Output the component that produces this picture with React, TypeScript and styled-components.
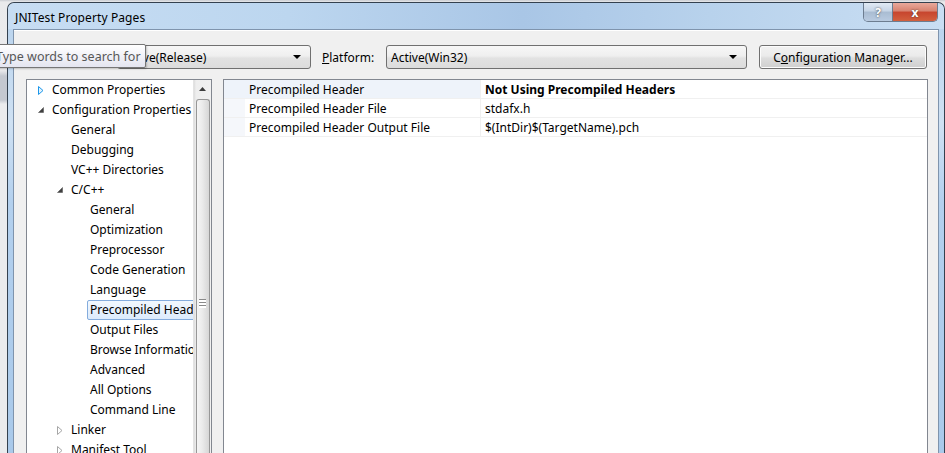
import React from 'react'
import styled, { createGlobalStyle } from 'styled-components'

const GlobalStyle = createGlobalStyle`
  html, body {
    margin: 0;
    padding: 0;
  }
  body {
    font-family: "Noto Sans", "Liberation Sans", sans-serif;
    font-size: 12px;
    color: #000;
    background: #e6e7ea;
    overflow: hidden;
  }
`

const Screen = styled.div`
  position: relative;
  width: 945px;
  height: 453px;
  overflow: hidden;
  display: flex;
  box-sizing: border-box;
  padding: 2px 0 0 7px;
  background: linear-gradient(180deg, #c9ccd2 0, #e9eaec 2px, #ececee 70px, #c4c8d0 76px, #c4c8d0 100px, #eaebed 104px);
`

const Window = styled.div`
  width: 938px;
  display: flex;
  flex-direction: column;
  overflow: hidden;
  border: 1px solid #34414f;
  border-bottom: none;
  border-radius: 7px 7px 0 0;
  background: linear-gradient(180deg, #c2d9f0 0, #bcd5ee 30px, #cfe1f3 120px, #b3d0ee 200px, #a9c9ea 453px);
`

const TitleBar = styled.div`
  height: 26px;
  flex-shrink: 0;
  display: flex;
  align-items: flex-start;
  padding-left: 7px;
  border-radius: 6px 6px 0 0;
  background: linear-gradient(90deg, #c7ddf3 0, #bcd6ef 30%, #a9c6e6 55%, #b8d2ec 75%, #c9def3 100%);
`

const Title = styled.div`
  margin-top: 6px;
  font-size: 12px;
  color: #000;
  letter-spacing: 0.1px;
`

const CaptionButtons = styled.div`
  margin-left: auto;
  margin-right: 6px;
  display: flex;
  border: 1px solid #6d7d90;
  border-top: none;
  border-radius: 0 0 5px 5px;
  overflow: hidden;
`

const CaptionButton = styled.div<{ $close?: boolean }>`
  width: ${(p) => (p.$close ? 44 : 28)}px;
  height: 18px;
  display: flex;
  align-items: center;
  justify-content: center;
  color: #fff;
  font-weight: bold;
  font-size: 12px;
  background: ${(p) =>
    p.$close
      ? 'linear-gradient(180deg, #e9a99c 0, #d7826f 45%, #c7452e 50%, #d2603e 100%)'
      : 'linear-gradient(180deg, #e1eaf4 0, #c6d5e6 45%, #a9bcd2 50%, #b9cbe0 100%)'};
  border-left: ${(p) => (p.$close ? '1px solid #6d7d90' : 'none')};
  text-shadow: 0 0 2px #333;
`

const Client = styled.div`
  flex: 1;
  min-height: 0;
  overflow: hidden;
  margin: 0 5px;
  border: 1px solid #7f94ad;
  border-bottom: none;
  background: #f0f0f0;
  display: flex;
  flex-direction: column;
  box-shadow: inset 0 1px 0 #ffffff;
`

const Toolbar = styled.div`
  display: flex;
  flex-shrink: 0;
  align-items: center;
  height: 24px;
  padding: 15px 11px 0 12px;
`

const Label = styled.div<{ $width: number; $gap?: number }>`
  width: ${(p) => p.$width}px;
  margin-left: ${(p) => p.$gap ?? 0}px;
  flex-shrink: 0;
  u {
    text-decoration: underline;
  }
`

const Combo = styled.div<{ $width: number }>`
  width: ${(p) => p.$width}px;
  height: 24px;
  box-sizing: border-box;
  flex-shrink: 0;
  border: 1px solid #707070;
  border-radius: 3px;
  background: linear-gradient(180deg, #f7f7f7 0, #efefef 45%, #e2e2e2 55%, #dcdcdc 100%);
  display: flex;
  align-items: center;
  padding: 0 9px 0 4px;
`

const ComboText = styled.span`
  flex: 1;
  white-space: nowrap;
  overflow: hidden;
`

const Arrow = styled.span`
  width: 0;
  height: 0;
  border-left: 4px solid transparent;
  border-right: 4px solid transparent;
  border-top: 4px solid #000;
`

const Button = styled.div`
  width: 168px;
  height: 24px;
  margin-left: 12px;
  box-sizing: border-box;
  flex-shrink: 0;
  border: 1px solid #707070;
  border-radius: 3px;
  background: linear-gradient(180deg, #f2f2f2 0, #ebebeb 45%, #dddddd 55%, #cfcfcf 100%);
  box-shadow: inset 0 0 0 1px #fcfcfc;
  display: flex;
  align-items: center;
  justify-content: center;
  u {
    text-decoration: underline;
  }
`

const Panels = styled.div`
  flex: 1;
  display: flex;
  gap: 11px;
  padding: 10px 10px 0 12px;
  min-height: 0;
`

const TreePanel = styled.div`
  width: 186px;
  flex-shrink: 0;
  box-sizing: border-box;
  border: 1px solid #828790;
  border-bottom: none;
  background: #fff;
  display: flex;
  overflow: hidden;
`

const TreeList = styled.div`
  flex: 1;
  min-width: 0;
  overflow: hidden;
`

const TreeRow = styled.div<{ $level: number }>`
  height: 20px;
  display: flex;
  align-items: center;
  padding-left: ${(p) => 11 + p.$level * 19}px;
  white-space: nowrap;
`

const Toggle = styled.span`
  width: 14px;
  height: 20px;
  flex-shrink: 0;
  display: flex;
  align-items: center;
`

const ItemText = styled.span<{ $selected?: boolean }>`
  height: 20px;
  line-height: 18px;
  box-sizing: border-box;
  padding: 0 2px;
  margin-left: -3px;
  border: 1px solid ${(p) => (p.$selected ? '#84acdd' : 'transparent')};
  border-radius: 2px;
  background: ${(p) => (p.$selected ? 'linear-gradient(180deg, #f2f8fe 0, #dcebfc 100%)' : 'none')};
  flex-shrink: 0;
  ${(p) => (p.$selected ? 'padding-right: 30px;' : '')}
`

const ScrollBar = styled.div`
  width: 17px;
  flex-shrink: 0;
  background: linear-gradient(90deg, #dcdcdc 0, #eeeeee 2px, #f0f0f0 100%);
  display: flex;
  flex-direction: column;
  align-items: center;
  border-left: 1px solid #e3e3e3;
`

const ScrollArrow = styled.div`
  height: 17px;
  display: flex;
  align-items: center;
  justify-content: center;
`

const ScrollThumb = styled.div`
  margin-top: 2px;
  width: 14px;
  flex: 1;
  box-sizing: border-box;
  border: 1px solid #979797;
  border-bottom: none;
  border-radius: 3px 3px 0 0;
  background: linear-gradient(90deg, #f5f5f5 0, #ececec 40%, #d6d6d6 100%);
  display: flex;
  flex-direction: column;
  align-items: center;
  padding-top: 199px;
`

const Grip = styled.div`
  width: 7px;
  height: 3px;
  background: #fff;
  border-top: 1px solid #8a8a8a;
  box-sizing: border-box;
`

const GridPanel = styled.div`
  flex: 1;
  box-sizing: border-box;
  border: 1px solid #828790;
  border-bottom: none;
  background: #fff;
`

const GridRow = styled.div`
  height: 19px;
  box-sizing: border-box;
  display: flex;
  border-bottom: 1px solid #f0f0f0;
  white-space: nowrap;
`

const Gutter = styled.div<{ $active?: boolean }>`
  width: 21px;
  flex-shrink: 0;
  background: ${(p) => (p.$active ? '#eef3fa' : '#f5f7fb')};
`

const NameCell = styled.div<{ $active?: boolean }>`
  width: 236px;
  flex-shrink: 0;
  box-sizing: border-box;
  padding: 2px 0 0 4px;
  line-height: 16px;
  background: ${(p) => (p.$active ? '#eef3fa' : '#fff')};
  border-right: 1px solid #f0f0f0;
`

const ValueCell = styled.div<{ $bold?: boolean }>`
  flex: 1;
  padding: 2px 0 0 4px;
  line-height: 16px;
  font-weight: ${(p) => (p.$bold ? 'bold' : 'normal')};
`

const Tooltip = styled.div`
  position: absolute;
  left: -10px;
  top: 44px;
  height: 24px;
  box-sizing: border-box;
  border: 1px solid #767676;
  border-radius: 2px;
  background: linear-gradient(180deg, #ffffff 0, #e4e5f0 100%);
  box-shadow: 1px 1px 2px rgba(0, 0, 0, 0.2);
  padding: 0 4px 0 5px;
  display: flex;
  align-items: center;
  font-size: 12.5px;
  color: #575757;
  white-space: nowrap;
`

type Node = { text: string; level: number; toggle?: 'open' | 'closed' | 'hover'; selected?: boolean }

const tree: Node[] = [
  { text: 'Common Properties', level: 0, toggle: 'hover' },
  { text: 'Configuration Properties', level: 0, toggle: 'open' },
  { text: 'General', level: 1 },
  { text: 'Debugging', level: 1 },
  { text: 'VC++ Directories', level: 1 },
  { text: 'C/C++', level: 1, toggle: 'open' },
  { text: 'General', level: 2 },
  { text: 'Optimization', level: 2 },
  { text: 'Preprocessor', level: 2 },
  { text: 'Code Generation', level: 2 },
  { text: 'Language', level: 2 },
  { text: 'Precompiled Headers', level: 2, selected: true },
  { text: 'Output Files', level: 2 },
  { text: 'Browse Information', level: 2 },
  { text: 'Advanced', level: 2 },
  { text: 'All Options', level: 2 },
  { text: 'Command Line', level: 2 },
  { text: 'Linker', level: 1, toggle: 'closed' },
  { text: 'Manifest Tool', level: 1, toggle: 'closed' },
]

const props = [
  { name: 'Precompiled Header', value: 'Not Using Precompiled Headers', bold: true },
  { name: 'Precompiled Header File', value: 'stdafx.h' },
  { name: 'Precompiled Header Output File', value: '$(IntDir)$(TargetName).pch' },
]

function ToggleIcon({ kind }: { kind?: Node['toggle'] }) {
  if (kind === 'open')
    return (
      <svg width="6" height="6" viewBox="0 0 6 6">
        <polygon points="5.5,0.5 5.5,5.5 0.5,5.5" fill="#404040" stroke="#5a5a5a" strokeWidth="0.6" />
      </svg>
    )
  if (kind === 'closed' || kind === 'hover')
    return (
      <svg width="6" height="9" viewBox="0 0 6 9" style={{ marginTop: 1 }}>
        <polygon
          points="0.5,0.5 5,4.5 0.5,8.5"
          fill={kind === 'hover' ? '#e5f3fb' : '#fff'}
          stroke={kind === 'hover' ? '#1c97ea' : '#a6a6a6'}
          strokeWidth="1"
        />
      </svg>
    )
  return null
}

function App() {
  return (
    <Screen>
      <GlobalStyle />
      <Window>
        <TitleBar>
          <Title>JNITest Property Pages</Title>
          <CaptionButtons>
            <CaptionButton>?</CaptionButton>
            <CaptionButton $close>x</CaptionButton>
          </CaptionButtons>
        </TitleBar>
        <Client>
          <Toolbar>
            <Label $width={91}>
              <u>C</u>onfiguration:
            </Label>
            <Combo $width={194}>
              <ComboText>Active(Release)</ComboText>
              <Arrow />
            </Combo>
            <Label $width={64} $gap={11}>
              <u>P</u>latform:
            </Label>
            <Combo $width={361}>
              <ComboText>Active(Win32)</ComboText>
              <Arrow />
            </Combo>
            <Button>
              C<u>o</u>nfiguration Manager...
            </Button>
          </Toolbar>
          <Panels>
            <TreePanel>
              <TreeList>
                {tree.map((n, i) => (
                  <TreeRow key={i} $level={n.level}>
                    <Toggle>
                      <ToggleIcon kind={n.toggle} />
                    </Toggle>
                    <ItemText $selected={n.selected}>{n.text}</ItemText>
                  </TreeRow>
                ))}
              </TreeList>
              <ScrollBar>
                <ScrollArrow>
                  <svg width="7" height="4" viewBox="0 0 7 4">
                    <polygon points="3.5,0 7,4 0,4" fill="#3c3c3c" />
                  </svg>
                </ScrollArrow>
                <ScrollThumb>
                  <Grip />
                  <Grip />
                  <Grip />
                </ScrollThumb>
              </ScrollBar>
            </TreePanel>
            <GridPanel>
              {props.map((p, i) => (
                <GridRow key={i}>
                  <Gutter $active={i === 0} />
                  <NameCell $active={i === 0}>{p.name}</NameCell>
                  <ValueCell $bold={p.bold}>{p.value}</ValueCell>
                </GridRow>
              ))}
            </GridPanel>
          </Panels>
        </Client>
      </Window>
      <Tooltip>Type words to search for</Tooltip>
    </Screen>
  )
}

export default App
